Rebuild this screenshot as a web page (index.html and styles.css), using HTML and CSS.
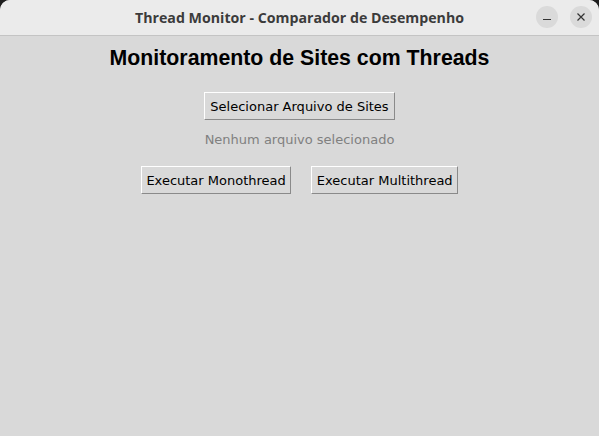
FILE: index.html
```html
<!DOCTYPE html>
<html lang="pt">
<head>
<meta charset="utf-8">
<title>Thread Monitor</title>
<link rel="stylesheet" href="styles.css">
</head>
<body>
<div class="window">
  <header class="titlebar">
    <div class="title">Thread Monitor - Comparador de Desempenho</div>
    <div class="controls">
      <span class="ctl"><svg width="10" height="10" viewBox="0 0 10 10"><path d="M1 7.5h8" stroke="#333" stroke-width="1.2"/></svg></span>
      <span class="ctl"><svg width="10" height="10" viewBox="0 0 10 10"><path d="M1.5 1.5l7 7M8.5 1.5l-7 7" stroke="#333" stroke-width="1.2"/></svg></span>
    </div>
  </header>
  <main class="content">
    <h1 class="heading">Monitoramento de Sites com Threads</h1>
    <button class="tkbtn select">Selecionar Arquivo de Sites</button>
    <div class="status">Nenhum arquivo selecionado</div>
    <div class="row">
      <button class="tkbtn">Executar Monothread</button>
      <button class="tkbtn">Executar Multithread</button>
    </div>
  </main>
</div>
</body>
</html>
```
FILE: styles.css
```css
html, body {
  margin: 0;
  padding: 0;
  width: 599px;
  height: 436px;
  background: #1e1e1e;
  overflow: hidden;
}
.window {
  width: 599px;
  height: 436px;
  display: flex;
  flex-direction: column;
  border-radius: 10px 10px 0 0;
  overflow: hidden;
  background: #d9d9d9;
}
.titlebar {
  position: relative;
  height: 35px;
  flex: none;
  background: #ebebeb;
  border-bottom: 1px solid #c4c4c4;
  display: flex;
  align-items: center;
  justify-content: center;
}
.title {
  font-family: "Open Sans", "DejaVu Sans", sans-serif;
  font-weight: 700;
  font-size: 14.2px;
  color: #3b3b3b;
}
.controls {
  position: absolute;
  right: 7px;
  top: 6px;
  display: flex;
  gap: 12px;
}
.ctl {
  width: 22px;
  height: 22px;
  border-radius: 50%;
  background: #dadada;
  display: flex;
  align-items: center;
  justify-content: center;
}
.content {
  flex: 1;
  display: flex;
  flex-direction: column;
  align-items: center;
  padding-top: 8px;
}
.heading {
  margin: 0;
  font-family: "Liberation Sans", Arial, sans-serif;
  font-weight: 700;
  font-size: 21.3px;
  line-height: 28px;
  color: #000;
}
.tkbtn {
  font-family: "DejaVu Sans", sans-serif;
  font-size: 13px;
  color: #000;
  background: #d9d9d9;
  border: 1px solid;
  border-color: #ffffff #8a8a8a #8a8a8a #ffffff;
  border-radius: 0;
  padding: 0 5px;
  height: 28px;
}
.select {
  margin-top: 20px;
}
.status {
  margin-top: 10px;
  font-family: "DejaVu Sans", sans-serif;
  font-size: 13px;
  line-height: 20px;
  color: #808080;
}
.row {
  margin-top: 16px;
  display: flex;
  gap: 20px;
}
.row .tkbtn {
  padding: 0 4.5px;
}
```
